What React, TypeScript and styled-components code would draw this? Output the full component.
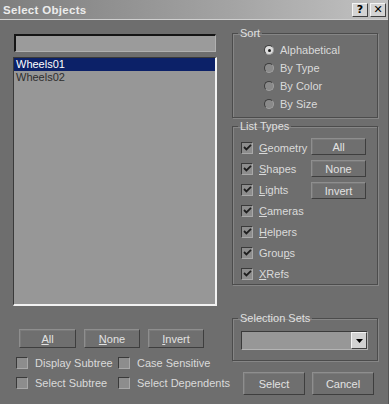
import React from "react";
import styled, { createGlobalStyle } from "styled-components";

const GlobalStyle = createGlobalStyle`
  html, body {
    margin: 0;
    padding: 0;
    background: #6e6e6e;
  }
  body {
    font-family: "Liberation Sans", Arial, sans-serif;
    font-size: 11px;
    color: #dadada;
  }
`;

const Window = styled.div`
  width: 389px;
  height: 404px;
  background: #6e6e6e;
  display: flex;
  flex-direction: column;
  overflow: hidden;
  box-sizing: border-box;
  border-right: 1px solid #555;
`;

const TitleBar = styled.div`
  height: 19px;
  flex: none;
  display: flex;
  align-items: center;
  justify-content: space-between;
  padding: 0 2px 0 3px;
  background: linear-gradient(90deg, #7e7e7e 0%, #a4a4a4 60%, #c2c2c2 100%);
  border-bottom: 1px solid #cfcfcf;
`;

const Title = styled.span`
  font-weight: bold;
  font-size: 11.5px;
  color: #ececec;
  letter-spacing: 0.3px;
`;

const TitleButtons = styled.div`
  display: flex;
  gap: 2px;
`;

const TitleButton = styled.span`
  width: 16px;
  height: 14px;
  box-sizing: border-box;
  display: flex;
  align-items: center;
  justify-content: center;
  background: #d4d4d4;
  border: 1px solid;
  border-color: #f4f4f4 #404040 #404040 #f4f4f4;
  color: #000;
  font-weight: bold;
  font-size: 11px;
  font-family: "DejaVu Sans", sans-serif;
`;

const Body = styled.div`
  display: grid;
  grid-template-columns: 204px 146px;
  column-gap: 15px;
  padding: 14px 0 0 13px;
`;

const LeftColumn = styled.div`
  display: flex;
  flex-direction: column;
`;

const RightColumn = styled.div`
  display: flex;
  flex-direction: column;
  margin-top: -7px;
`;

const SearchBox = styled.div`
  margin-left: 1px;
  width: 202px;
  height: 18px;
  box-sizing: border-box;
  background: #9b9b9b;
  border-style: solid;
  border-width: 2px 1px 1px 2px;
  border-color: #151515 #b0b0b0 #b0b0b0 #151515;
`;

const ObjectList = styled.div`
  margin-top: 5px;
  height: 249px;
  box-sizing: border-box;
  background: #979797;
  border-style: solid;
  border-width: 1px 2px 2px 1px;
  border-color: #3a3a3a #f2f2f2 #f2f2f2 #3a3a3a;
`;

const ListItem = styled.div<{ $selected?: boolean }>`
  height: 13px;
  line-height: 13px;
  padding-left: 2px;
  background: ${(p) => (p.$selected ? "#0c2168" : "transparent")};
  color: ${(p) => (p.$selected ? "#ffffff" : "#2e2e2e")};
`;

const Button = styled.div<{ $w: number; $h: number }>`
  width: ${(p) => p.$w}px;
  height: ${(p) => p.$h}px;
  box-sizing: border-box;
  display: flex;
  align-items: center;
  justify-content: center;
  background: #6f6f6f;
  border: 1px solid;
  border-color: #8e8e8e #3e3e3e #3e3e3e #8e8e8e;
  box-shadow: inset 1px 1px 0 #7a7a7a;
  color: #e2e2e2;
`;

const ButtonRow = styled.div<{ $gap: number; $pad: number; $top: number }>`
  display: flex;
  gap: ${(p) => p.$gap}px;
  padding-left: ${(p) => p.$pad}px;
  margin-top: ${(p) => p.$top}px;
`;

const OptionGrid = styled.div`
  display: grid;
  grid-template-columns: 102px auto;
  grid-auto-rows: 20px;
  padding-left: 3px;
  margin-top: 5px;
`;

const Option = styled.label`
  display: flex;
  align-items: center;
  gap: 7px;
  white-space: nowrap;
`;

const Box = styled.span`
  width: 12px;
  height: 12px;
  box-sizing: border-box;
  flex: none;
  background: #8d8d8d;
  border: 1px solid;
  border-color: #3a3a3a #a8a8a8 #a8a8a8 #3a3a3a;
  display: flex;
  align-items: center;
  justify-content: center;
`;

const Group = styled.fieldset<{ $top: number; $pad: string }>`
  margin: ${(p) => p.$top}px 0 0 0;
  padding: ${(p) => p.$pad};
  min-inline-size: 0;
  border: 1px solid #4c4c4c;
  box-shadow: inset 1px 1px 0 #868686, 1px 1px 0 #868686;
`;

const Legend = styled.legend`
  padding: 0 2px;
  margin-left: 5px;
  line-height: 13px;
  color: #e0e0e0;
`;

const RadioRow = styled.div`
  height: 18px;
  display: flex;
  align-items: center;
  gap: 6px;
  padding-left: 31px;
`;

const Radio = styled.span<{ $on?: boolean }>`
  width: 10px;
  height: 10px;
  box-sizing: border-box;
  border-radius: 50%;
  background: ${(p) => (p.$on ? "#dcdcdc" : "#8a8a8a")};
  border: 1px solid;
  border-color: #3c3c3c #a0a0a0 #a0a0a0 #3c3c3c;
  display: flex;
  align-items: center;
  justify-content: center;
  &::after {
    content: "";
    width: 3px;
    height: 3px;
    border-radius: 50%;
    background: ${(p) => (p.$on ? "#1c1c1c" : "transparent")};
  }
`;

const TypesLayout = styled.div`
  display: grid;
  grid-template-columns: 70px auto;
  padding-left: 8px;
`;

const TypeRow = styled.div`
  height: 21px;
  display: flex;
  align-items: center;
  gap: 6px;
`;

const TypeButtons = styled.div`
  display: flex;
  flex-direction: column;
  gap: 5px;
  margin-top: 1px;
`;

const Combo = styled.div`
  margin-left: 8px;
  width: 127px;
  height: 19px;
  box-sizing: border-box;
  background: #979797;
  border: 1px solid;
  border-color: #3a3a3a #b4b4b4 #b4b4b4 #3a3a3a;
  display: flex;
  justify-content: flex-end;
  align-items: stretch;
`;

const ComboButton = styled.span`
  width: 16px;
  box-sizing: border-box;
  background: #d2d2d2;
  border: 1px solid;
  border-color: #f4f4f4 #404040 #404040 #f4f4f4;
  display: flex;
  align-items: center;
  justify-content: center;
`;

const Check = () => (
  <svg width="9" height="9" viewBox="0 0 9 9">
    <path d="M1 4 L3.4 6.4 L8 1.8" stroke="#1e1e1e" strokeWidth="1.8" fill="none" />
  </svg>
);

const Key = ({ text, at }: { text: string; at: number }) => (
  <span>
    {text.slice(0, at)}
    <u>{text[at]}</u>
    {text.slice(at + 1)}
  </span>
);

const types: [string, number][] = [
  ["Geometry", 0],
  ["Shapes", 0],
  ["Lights", 0],
  ["Cameras", 0],
  ["Helpers", 0],
  ["Groups", 4],
  ["XRefs", 0],
];

const sorts = ["Alphabetical", "By Type", "By Color", "By Size"];

export default function App() {
  return (
    <>
      <GlobalStyle />
      <Window>
        <TitleBar>
          <Title>Select Objects</Title>
          <TitleButtons>
            <TitleButton>?</TitleButton>
            <TitleButton>✕</TitleButton>
          </TitleButtons>
        </TitleBar>
        <Body>
          <LeftColumn>
            <SearchBox />
            <ObjectList>
              <ListItem $selected>Wheels01</ListItem>
              <ListItem>Wheels02</ListItem>
            </ObjectList>
            <ButtonRow $gap={8} $pad={6} $top={23}>
              <Button $w={57} $h={19}>
                <Key text="All" at={0} />
              </Button>
              <Button $w={56} $h={19}>
                <Key text="None" at={0} />
              </Button>
              <Button $w={56} $h={19}>
                <Key text="Invert" at={0} />
              </Button>
            </ButtonRow>
            <OptionGrid>
              <Option>
                <Box />
                Display Subtree
              </Option>
              <Option>
                <Box />
                Case Sensitive
              </Option>
              <Option>
                <Box />
                Select Subtree
              </Option>
              <Option>
                <Box />
                Select Dependents
              </Option>
            </OptionGrid>
          </LeftColumn>
          <RightColumn>
            <Group $top={0} $pad="1px 0 4px 0">
              <Legend>Sort</Legend>
              {sorts.map((s, i) => (
                <RadioRow key={s}>
                  <Radio $on={i === 0} />
                  {s}
                </RadioRow>
              ))}
            </Group>
            <Group $top={2} $pad="4px 0 0 0">
              <Legend>List Types</Legend>
              <TypesLayout>
                <div>
                  {types.map(([t, k]) => (
                    <TypeRow key={t}>
                      <Box>
                        <Check />
                      </Box>
                      <Key text={t} at={k} />
                    </TypeRow>
                  ))}
                </div>
                <TypeButtons>
                  <Button $w={55} $h={17}>All</Button>
                  <Button $w={55} $h={17}>None</Button>
                  <Button $w={55} $h={17}>Invert</Button>
                </TypeButtons>
              </TypesLayout>
            </Group>
            <Group $top={27} $pad="6px 0 10px 0">
              <Legend>Selection Sets</Legend>
              <Combo>
                <ComboButton>
                  <svg width="7" height="4" viewBox="0 0 7 4">
                    <path d="M0 0 H7 L3.5 4 Z" fill="#000" />
                  </svg>
                </ComboButton>
              </Combo>
            </Group>
            <ButtonRow $gap={7} $pad={11} $top={11}>
              <Button $w={62} $h={23}>Select</Button>
              <Button $w={62} $h={23}>Cancel</Button>
            </ButtonRow>
          </RightColumn>
        </Body>
      </Window>
    </>
  );
}
